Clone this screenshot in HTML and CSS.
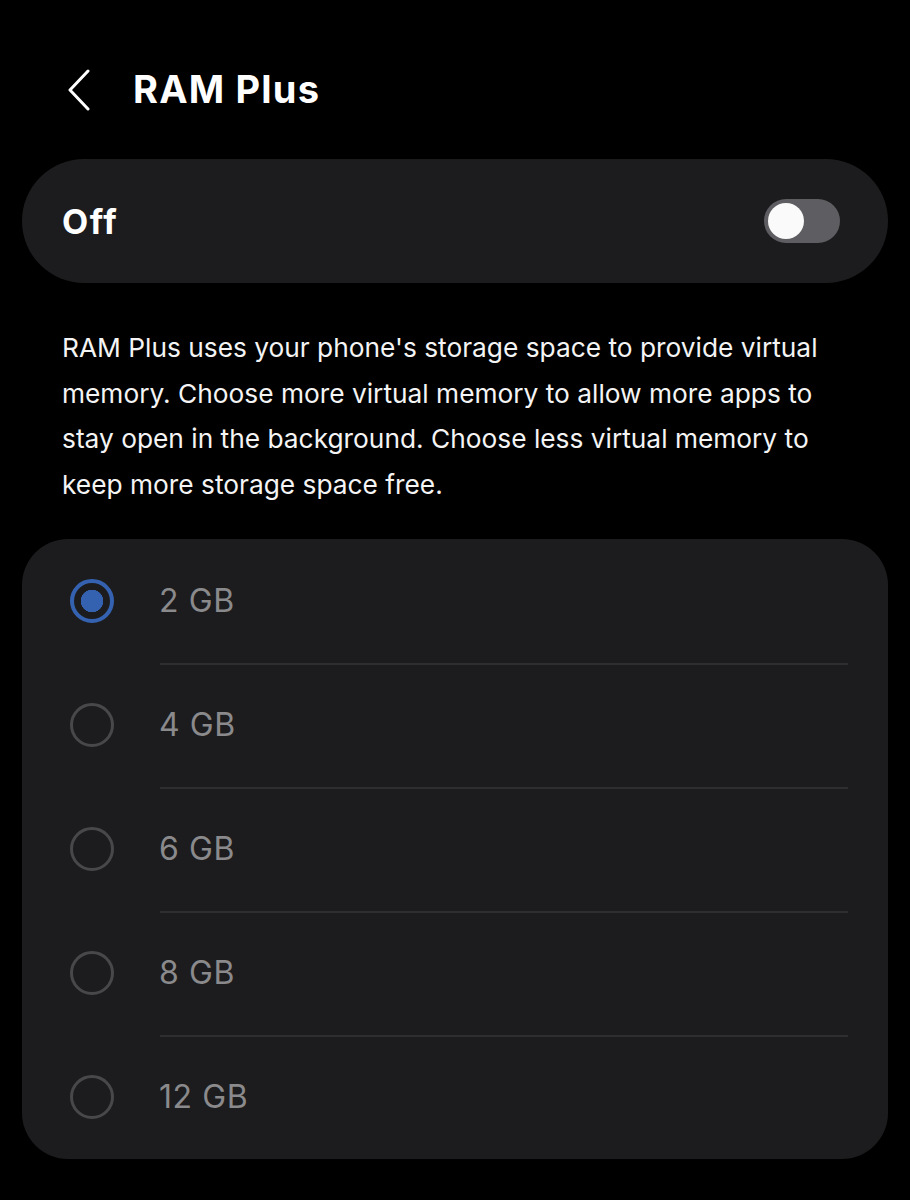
FILE: index.html
```html
<!DOCTYPE html>
<html lang="en">
<head>
<meta charset="utf-8">
<title>RAM Plus</title>
<link rel="stylesheet" href="styles.css">
</head>
<body>
<div class="screen">
  <header class="topbar">
    <svg class="back" width="26" height="42" viewBox="0 0 26 42"><path d="M22 2 L4 21 L22 40" fill="none" stroke="#fff" stroke-width="3" stroke-linecap="round" stroke-linejoin="round"/></svg>
    <h1 class="title">RAM Plus</h1>
  </header>

  <section class="switch-card">
    <span class="switch-label">Off</span>
    <span class="toggle"><span class="thumb"></span></span>
  </section>

  <p class="desc">RAM Plus uses your phone's storage space to provide virtual memory. Choose more virtual memory to allow more apps to stay open in the background. Choose less virtual memory to keep more storage space free.</p>

  <section class="options">
    <div class="option"><span class="radio checked"></span><span class="opt-label">2 GB</span></div>
    <div class="option"><span class="radio"></span><span class="opt-label">4 GB</span></div>
    <div class="option"><span class="radio"></span><span class="opt-label">6 GB</span></div>
    <div class="option"><span class="radio"></span><span class="opt-label">8 GB</span></div>
    <div class="option"><span class="radio"></span><span class="opt-label">12 GB</span></div>
  </section>
</div>
</body>
</html>
```
FILE: styles.css
```css
html, body {
  margin: 0;
  padding: 0;
  background: #000;
}
body {
  font-family: Inter, Roboto, "Noto Sans", sans-serif;
  color: #fff;
}
.screen {
  width: 910px;
  height: 1200px;
  box-sizing: border-box;
  padding: 0 22px;
}
.topbar {
  display: flex;
  align-items: flex-start;
  height: 159px;
  padding: 68px 0 0 44px;
  box-sizing: border-box;
}
.back {
  display: block;
  margin-top: 1px;
}
.title {
  margin: 0 0 0 41px;
  font-size: 38px;
  font-weight: 700;
  line-height: 42px;
  letter-spacing: 1.2px;
}
.switch-card {
  height: 124px;
  border-radius: 62px;
  background: #1c1c1e;
  display: flex;
  align-items: center;
  justify-content: space-between;
  padding: 0 48px 0 40px;
}
.switch-label {
  font-size: 34px;
  font-weight: 700;
  letter-spacing: 1.5px;
}
.toggle {
  width: 76px;
  height: 44px;
  border-radius: 22px;
  background: #5e5e62;
  display: flex;
  align-items: center;
  padding: 0 4px;
  box-sizing: border-box;
}
.thumb {
  width: 36px;
  height: 36px;
  border-radius: 50%;
  background: #fafafa;
}
.desc {
  margin: 42px 0 0;
  padding: 0 40px;
  font-size: 26.3px;
  line-height: 45.7px;
  color: #f4f4f4;
}
.options {
  margin-top: 31px;
  background: #1c1c1e;
  border-radius: 46px;
  padding: 0 40px 0 48px;
}
.option {
  height: 124px;
  display: flex;
  align-items: center;
  position: relative;
}
.option + .option::before {
  content: "";
  position: absolute;
  top: 0;
  left: 90px;
  right: 0;
  height: 2px;
  background: #2e2e30;
}
.radio {
  width: 44px;
  height: 44px;
  border-radius: 50%;
  border: 3px solid #48484a;
  box-sizing: border-box;
  flex: none;
}
.radio.checked {
  border: 4px solid #3562b0;
  background: radial-gradient(circle, #3562b0 0 11px, transparent 11.5px);
}
.opt-label {
  margin-left: 45px;
  font-size: 32px;
  letter-spacing: 0.6px;
  color: #8a8a8c;
}
```
